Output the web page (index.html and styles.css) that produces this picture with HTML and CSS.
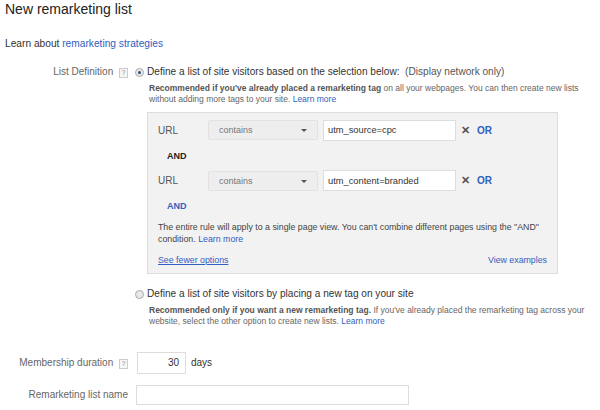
FILE: index.html
```html
<!DOCTYPE html>
<html>
<head>
<meta charset="utf-8">
<link rel="stylesheet" href="styles.css">
</head>
<body>
<div class="page">
  <h1 class="title">New remarketing list</h1>
  <p class="learn">Learn about <a class="link" href="#">remarketing strategies</a></p>

  <div class="row row-def">
    <div class="label">List Definition <span class="help">?</span></div>
    <div class="content">
      <div class="option">
        <span class="radio checked"></span>
        <span class="opt-text">Define a list of site visitors based on the selection below:&nbsp; <span class="muted">(Display network only)</span></span>
      </div>
      <div class="desc">
        <div class="line"><b>Recommended if you've already placed a remarketing tag</b> <span>on all your webpages. You can then create new lists</span></div>
        <div class="line"><span>without adding more tags to your site.</span> <a class="link" href="#">Learn more</a></div>
      </div>

      <div class="rules">
        <div class="rule">
          <span class="field">URL</span>
          <span class="select">contains<span class="caret"></span></span>
          <span class="input">utm_source=cpc</span>
          <span class="remove">&#x2715;</span>
          <span class="or">OR</span>
        </div>
        <div class="and">AND</div>
        <div class="rule">
          <span class="field">URL</span>
          <span class="select">contains<span class="caret"></span></span>
          <span class="input">utm_content=branded</span>
          <span class="remove">&#x2715;</span>
          <span class="or">OR</span>
        </div>
        <div class="and blue">AND</div>
        <div class="note">
          <div class="line">The entire rule will apply to a single page view. You can't combine different pages using the "AND"</div>
          <div class="line"><span>condition.</span> <a class="link" href="#">Learn more</a></div>
        </div>
        <div class="rules-foot">
          <a class="link under" href="#">See fewer options</a>
          <a class="link" href="#">View examples</a>
        </div>
      </div>

      <div class="option option2">
        <span class="radio"></span>
        <span class="opt-text">Define a list of site visitors by placing a new tag on your site</span>
      </div>
      <div class="desc">
        <div class="line"><b>Recommended only if you want a new remarketing tag.</b> <span>If you've already placed the remarketing tag across your</span></div>
        <div class="line"><span>website, select the other option to create new lists.</span> <a class="link" href="#">Learn more</a></div>
      </div>
    </div>
  </div>

  <div class="row row-dur">
    <div class="label">Membership duration <span class="help">?</span></div>
    <div class="content inline">
      <span class="num">30</span>
      <span class="days">days</span>
    </div>
  </div>

  <div class="row row-name">
    <div class="label">Remarketing list name</div>
    <div class="content">
      <span class="name-input"></span>
    </div>
  </div>
</div>
</body>
</html>
```

FILE: styles.css
```css
html, body {
  margin: 0;
  padding: 0;
  background: #fff;
}
body {
  font-family: "Liberation Sans", Arial, sans-serif;
  color: #333;
  font-size: 10px;
}
.page {
  padding: 0 0 0 5px;
}
.title {
  font-size: 14px;
  line-height: 16px;
  font-weight: normal;
  color: #222;
  margin: 0;
  padding-top: 1px;
  height: 37px;
}
.learn {
  margin: 0;
  font-size: 10.2px;
  line-height: 12px;
  color: #333;
  height: 28px;
}
.link {
  color: #3060c0;
  text-decoration: none;
}
.link.under {
  text-decoration: underline;
}
.row {
  display: grid;
  grid-template-columns: 123px 1fr;
  column-gap: 7px;
}
.label {
  text-align: right;
  color: #666;
  font-size: 10px;
  line-height: 12px;
}
.help {
  display: inline-block;
  width: 7px;
  height: 8px;
  line-height: 8px;
  font-size: 6.5px;
  text-align: center;
  border: 1px solid #ccc;
  color: #888;
  background: #f7f7f7;
  margin-left: 3px;
  vertical-align: 0;
}
.option {
  display: flex;
  align-items: center;
  gap: 3px;
  font-size: 10.1px;
  line-height: 12px;
  color: #333;
}
.radio {
  width: 7px;
  height: 7px;
  border-radius: 50%;
  border: 1px solid #aaa;
  background: #e8e8e8;
  box-sizing: content-box;
  position: relative;
  flex: none;
}
.radio.checked::after {
  content: "";
  position: absolute;
  left: 2px;
  top: 2px;
  width: 3px;
  height: 3px;
  border-radius: 50%;
  background: #2a4f8a;
}
.muted {
  color: #555;
}
.desc {
  margin: 4.5px 0 0 14px;
  font-size: 8.5px;
  line-height: 11px;
  color: #666;
}
.line {
  white-space: nowrap;
}
.desc b {
  color: #555;
}
.rules {
  margin: 7px 0 0 12px;
  width: 389px;
  background: #f2f2f2;
  border: 1px solid #ddd;
  padding: 7px 10px 7px 10px;
}
.rule {
  display: flex;
  align-items: center;
  height: 21px;
}
.field {
  width: 50px;
  color: #555;
  font-size: 10px;
}
.select {
  width: 110px;
  height: 20px;
  box-sizing: border-box;
  border: 1px solid #e2e2e2;
  border-radius: 2px;
  background: #eee;
  color: #777;
  font-size: 9px;
  padding-left: 10px;
  display: flex;
  align-items: center;
  position: relative;
}
.caret {
  position: absolute;
  right: 10px;
  top: 8px;
  width: 0;
  height: 0;
  border-left: 3px solid transparent;
  border-right: 3px solid transparent;
  border-top: 3px solid #555;
}
.input {
  margin-left: 5px;
  width: 133px;
  height: 21px;
  box-sizing: border-box;
  border: 1px solid #ddd;
  background: #fff;
  color: #333;
  font-size: 9.3px;
  padding-left: 4px;
  display: flex;
  align-items: center;
}
.remove {
  margin-left: 5px;
  color: #555;
  font-size: 11px;
  font-weight: bold;
}
.or {
  margin-left: 7px;
  color: #3060c0;
  font-weight: bold;
  font-size: 10px;
}
.and {
  font-weight: bold;
  font-size: 9px;
  line-height: 12px;
  color: #222;
  margin: 9px 0 8.5px 9px;
}
.and.blue {
  color: #3060c0;
  margin-bottom: 0;
}
.note {
  margin: 9px 0 0 0;
  font-size: 8.8px;
  line-height: 12px;
  color: #444;
}
.rules-foot {
  display: flex;
  justify-content: space-between;
  margin-top: 9px;
  font-size: 8.8px;
  line-height: 12px;
}
.option2 {
  margin-top: 14px;
}
.row-dur {
  margin-top: 25px;
  align-items: center;
}
.inline {
  display: flex;
  align-items: center;
  gap: 5px;
}
.num {
  width: 49px;
  height: 22px;
  box-sizing: border-box;
  border: 1px solid #ddd;
  text-align: right;
  padding-right: 6px;
  line-height: 20px;
  font-size: 10px;
  color: #333;
  margin-left: 2px;
}
.days {
  font-size: 10px;
  color: #333;
}
.row-name {
  margin-top: 11px;
  align-items: center;
}
.name-input {
  display: block;
  width: 273px;
  height: 20px;
  box-sizing: border-box;
  border: 1px solid #ddd;
  margin-left: 1px;
}
```
